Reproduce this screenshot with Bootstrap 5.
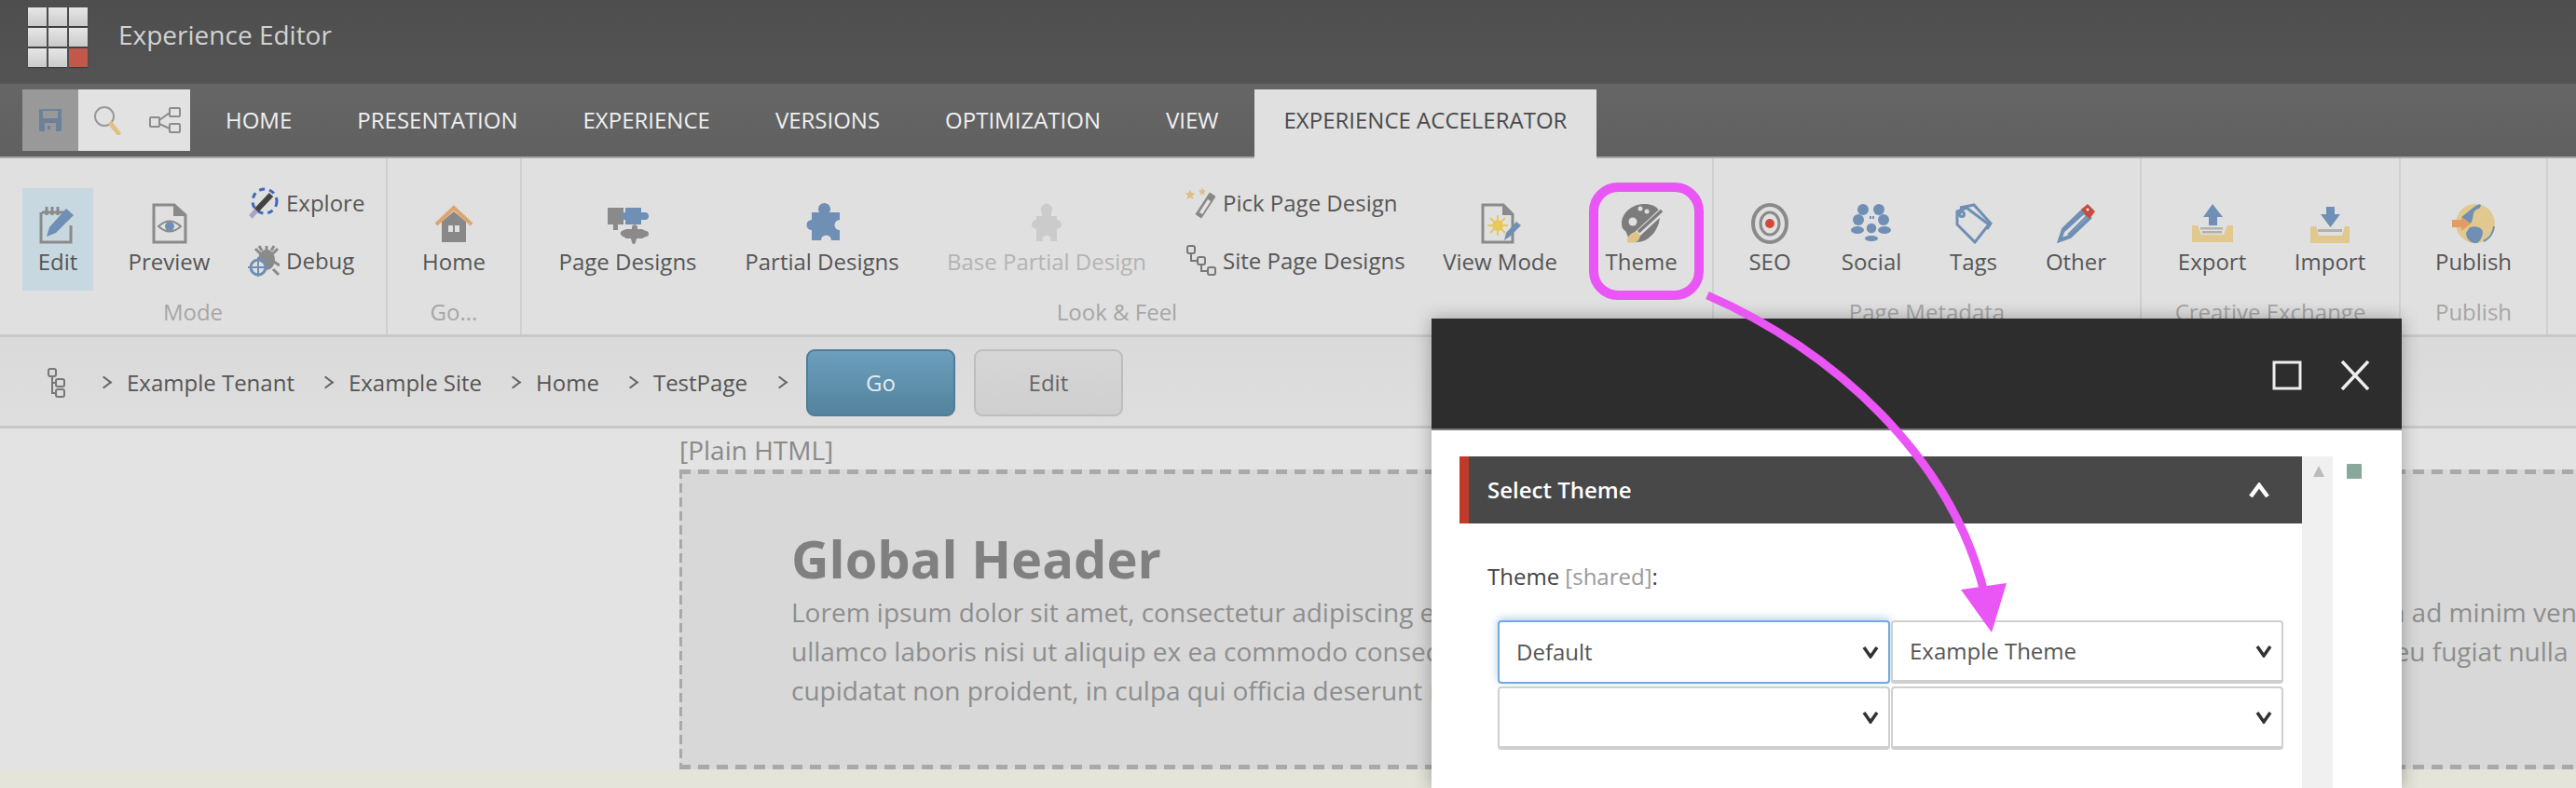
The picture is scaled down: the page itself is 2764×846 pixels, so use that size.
<!DOCTYPE html>
<html lang="en">
<head>
    <meta charset="UTF-8">
    <title>Experience Editor</title>
    <link href="https://cdn.jsdelivr.net/npm/bootstrap@5.3.0/dist/css/bootstrap.min.css" rel="stylesheet">
    <style>
        html, body { margin: 0; height: 846px; overflow: hidden; }
        body { font-family: "Open Sans", "Noto Sans", sans-serif; background: #e3e3e3; color: #555; }
        .page-wrap { position: relative; width: 2764px; height: 846px; overflow: hidden; }

        .top-bar { height: 90px; background: linear-gradient(#4e4e4e, #545454); padding: 8px 0 0 30px; }
        .app-logo { display: grid; grid-template-columns: repeat(3, 20px); grid-auto-rows: 20px; gap: 2px; height: 64px; }
        .app-logo i { display: block; background: linear-gradient(#e6e6e6, #cacaca); box-shadow: 0 1px 1px rgba(0,0,0,.3); }
        .app-logo i.logo-red { background: #c2574c; }
        .app-title { font-size: 28px; color: #d2d2d2; margin: -3px 0 0 33px; height: 64px; line-height: 64px; }

        .tab-bar { height: 80px; background: linear-gradient(#666, #606060); padding: 6px 0 0 24px; border-bottom: 2px solid #a8a8a8; }
        .quick-tools { width: 180px; height: 66px; background: #e2e2e2; }
        .quick-save { width: 60px; background: #999; }
        .quick-rest { flex: 1; padding-left: 16px; gap: 28px; }
        .tab-list { margin-left: 3px; }
        .tab-list .nav-link { color: #f0f0f0; font-size: 24px; padding: 0 35px; height: 66px; line-height: 66px; }
        .tab-list .nav-link.active-tab { background: #e0e0e0; color: #4a4a4a; height: 76px; padding: 0 32px; margin-left: 3px; }

        .ribbon { height: 192px; background: #e0e0e0; border-bottom: 3px solid #c8c8c8; position: relative; }
        .rb-group { height: 100%; border-right: 2px solid #d0d0d0; display: flex; flex-direction: column; flex: none; padding-top: 32px; }
        .rb-items { display: flex; height: 110px; }
        .rb-item { display: flex; flex-direction: column; align-items: center; padding-top: 16px; font-size: 24px; line-height: 36px; white-space: nowrap; color: #565656; }
        .rb-item svg { height: 44px; display: block; margin-bottom: 1px; }
        .rb-item.selected { background: #c8d8e1; width: 76px; }
        .rb-item.disabled-item { color: #b4b4b4; }
        .rb-side { display: flex; flex-direction: column; gap: 26px; margin-top: -2px; font-size: 24px; white-space: nowrap; color: #565656; }
        .rb-side > div { display: flex; align-items: center; height: 36px; }
        .rb-side svg { width: 34px; height: 34px; margin-right: 7px; flex: none; }
        .rb-caption { text-align: center; font-size: 24px; color: #a6a6a6; margin-top: 5px; white-space: nowrap; }

        .crumb-bar { height: 98px; background: linear-gradient(#dadada, #dedede); border-bottom: 3px solid #c8c8c8; padding-left: 50px; }
        .crumb-tree { margin-top: 2px; }
        .crumb-bar .breadcrumb { margin: 2px 0 0 34px; font-size: 24px; }
        .crumb-bar .breadcrumb-item { color: #555; padding-left: 0; display: flex; align-items: center; }
        .crumb-bar .breadcrumb-item::before { content: ""; float: none; padding: 0; width: 11px; height: 11px; border-top: 2px solid #666; border-right: 2px solid #666; transform: rotate(45deg) skew(-8deg, -8deg); margin: 0 19px 0 28px; }
        .crumb-bar .breadcrumb-item:first-child::before { margin-left: 0; display: block; }
        .crumb-end { width: 11px; height: 11px; border-top: 2px solid #666; border-right: 2px solid #666; transform: rotate(45deg) skew(-8deg, -8deg); margin: 2px 23px 0 29px; }
        .btn-go, .btn-editmode { width: 160px; height: 72px; font-size: 24px; border-radius: 9px; margin-top: 2px; }
        .btn-go { background: linear-gradient(#6c9fbd, #53839d); border: 2px solid #4d7d98; color: #e4ecf2; }
        .btn-editmode { background: linear-gradient(#d6d6d6, #cfcfcf); border: 2px solid #bdbdbd; color: #666; margin-left: 20px; }

        .canvas-area { padding-left: 729px; background: #e3e3e3; }
        .plain-label { font-size: 28px; color: #8a8a8a; height: 44px; line-height: 46px; }
        .dashed-box { height: 322px; padding: 59px 0 0 120px; white-space: nowrap;
            background:
                repeating-linear-gradient(90deg, #a9a9a9 0 12px, transparent 12px 20px) top / 100% 5px no-repeat,
                repeating-linear-gradient(90deg, #a9a9a9 0 12px, transparent 12px 20px) bottom / 100% 5px no-repeat,
                repeating-linear-gradient(180deg, #a9a9a9 0 10px, transparent 10px 15px) left / 3px 100% no-repeat,
                #d8d8d8; }
        .dashed-box h1 { font-size: 56px; font-weight: 700; color: #808080; margin: 0; line-height: 73px; }
        .dashed-box p { font-size: 28px; color: #8e8e8e; line-height: 42px; margin: 0; }
        .beige-strip { height: 30px; background: #e4e4da; }

        .theme-dialog { position: absolute; left: 1536px; top: 342px; width: 1041px; height: 504px; background: #fff; box-shadow: 0 0 18px rgba(0,0,0,.3); }
        .dlg-head { height: 120px; background: #2d2d2d; padding: 45px 34px 0 0; gap: 41px; border-bottom: 2px solid #777; }
        .dlg-body { padding: 28px 0 0 30px; }
        .section-col { width: 904px; }
        .section-bar { height: 72px; background: #484848; border-left: 10px solid #c0392b; color: #fff; font-weight: 600; font-size: 24px; padding: 0 34px 0 20px; }
        .theme-field { padding: 39px 0 0 30px; font-size: 24px; color: #444; }
        .theme-field span { color: #999; }
        .select-grid { display: grid; grid-template-columns: 421px 421px; gap: 3px 1px; margin: 29px 0 0 41px; }
        .select-grid .form-select { height: 68px; font-size: 24px; color: #555; font-family: inherit; border: 2px solid #cfcfcf; border-bottom-width: 4px; border-radius: 4px; padding: 0 36px 0 18px;
            background-image: url("data:image/svg+xml,%3csvg xmlns='http://www.w3.org/2000/svg' viewBox='0 0 18 14'%3e%3cpath fill='none' stroke='%23333' stroke-width='3.5' d='M2 2l7 10 7-10'/%3e%3c/svg%3e");
            background-size: 18px 14px; background-position: right 10px center; }
        .select-grid .form-select.focus-look { border: 2px solid #74a9dc; box-shadow: 0 -2px 10px rgba(116,169,220,.55); }
        .scroll-col { width: 33px; background: #f0f0f0; height: 420px; padding: 10px 0 0 12px; }
        .scroll-up { width: 0; height: 0; border-left: 6px solid transparent; border-right: 6px solid transparent; border-bottom: 12px solid #bbb; }
        .green-mark { width: 16px; height: 16px; background: #87a89a; margin: 8px 0 0 15px; border-radius: 1px; }

        .callout-layer { position: absolute; left: 0; top: 0; pointer-events: none; }
    </style>
</head>
<body>
<div class="page-wrap">
    <div class="top-bar d-flex">
        <div class="app-logo">
            <i></i><i></i><i></i><i></i><i></i><i></i><i></i><i></i><i class="logo-red"></i>
        </div>
        <div class="app-title">Experience Editor</div>
    </div>

    <div class="tab-bar d-flex">
        <div class="quick-tools d-flex">
            <div class="quick-save d-flex align-items-center justify-content-center">
                <svg width="26" height="26" viewBox="0 0 26 26"><path fill="#6b8299" d="M1 1h24v24H1z"/><path fill="#999" d="M5 3h16v8H5zM7 16h12v9H7z"/><path fill="#6b8299" d="M10 19h3v4h-3z"/></svg>
            </div>
            <div class="quick-rest d-flex align-items-center">
                <svg width="32" height="32" viewBox="0 0 32 32"><circle cx="12" cy="12" r="10" fill="none" stroke="#999" stroke-width="2"/><path stroke="#e0c07e" stroke-width="5" stroke-linecap="round" d="M19 20l8 10"/></svg>
                <svg width="34" height="28" viewBox="0 0 34 28" fill="none" stroke="#8c8c8c" stroke-width="2"><rect x="1" y="11" width="10" height="10" rx="1"/><rect x="22" y="1" width="11" height="9" rx="1"/><rect x="22" y="18" width="11" height="9" rx="1"/><path d="M11 14l11-8M11 18l11 5"/></svg>
            </div>
        </div>
        <ul class="nav tab-list">
            <li class="nav-item"><a class="nav-link" href="#">HOME</a></li>
            <li class="nav-item"><a class="nav-link" href="#">PRESENTATION</a></li>
            <li class="nav-item"><a class="nav-link" href="#">EXPERIENCE</a></li>
            <li class="nav-item"><a class="nav-link" href="#">VERSIONS</a></li>
            <li class="nav-item"><a class="nav-link" href="#">OPTIMIZATION</a></li>
            <li class="nav-item"><a class="nav-link" href="#">VIEW</a></li>
            <li class="nav-item"><a class="nav-link active-tab" href="#">EXPERIENCE ACCELERATOR</a></li>
        </ul>
    </div>

    <div class="ribbon d-flex">
        <div class="rb-group" style="width:416px">
            <div class="rb-items" style="padding-left:24px">
                <div class="rb-item selected">
                    <svg width="40" viewBox="0 0 40 44"><path fill="none" stroke="#8a8a8a" stroke-width="3" d="M3 10h26M2 10v32h32V24"/><path stroke="#8a8a8a" stroke-width="3" d="M8 4v9M14 4v9M20 4v9"/><path fill="#6f8fb5" d="M8 36l3-10 18-20 8 7-19 19z"/></svg>
                    Edit
                </div>
                <div class="rb-item" style="margin-left:38px;width:87px">
                    <svg width="38" viewBox="0 0 38 44"><path fill="none" stroke="#8a8a8a" stroke-width="3" d="M2 2h22l12 11v29H2z"/><path fill="#8a8a8a" d="M23 2l13 12H23z"/><path fill="none" stroke="#8a8a8a" stroke-width="2" d="M7 25q12-11 24 0q-12 11-24 0z"/><circle cx="19" cy="25" r="5" fill="#6f8fb5"/></svg>
                    Preview
                </div>
                <div class="rb-side" style="margin-left:41px">
                    <div><svg viewBox="0 0 34 34"><circle cx="18" cy="15" r="13" fill="none" stroke="#3f68bd" stroke-width="3" stroke-dasharray="6 5"/><path stroke="#444" stroke-width="6" d="M25 8L9 25"/><path stroke="#aaa0c8" stroke-width="5" d="M9 25l-6 7"/></svg>Explore</div>
                    <div><svg viewBox="0 0 34 34"><ellipse cx="20" cy="16" rx="9" ry="11" fill="#8a8a8a"/><path stroke="#8a8a8a" stroke-width="3" fill="none" d="M8 4l6 6M32 4l-6 6M12 1l3 5M28 1l-3 5M20 1v5M28 18l6 4M27 26l6 6"/><circle cx="11" cy="24" r="8" fill="#e0e0e0" stroke="#6f8fb5" stroke-width="3"/><path stroke="#6f8fb5" stroke-width="2" d="M11 13v22M0 24h22"/></svg>Debug</div>
                </div>
            </div>
            <div class="rb-caption">Mode</div>
        </div>

        <div class="rb-group" style="width:144px">
            <div class="rb-items justify-content-center">
                <div class="rb-item">
                    <svg width="42" viewBox="0 0 42 44"><path fill="#888" d="M8 20L21 9l13 11v22H8z"/><path fill="#e0e0e0" d="M15 24h12v7H15z"/><path fill="#888" d="M20 24h2v7h-2z"/><path fill="none" stroke="#dca56e" stroke-width="4" d="M2 23L21 5l19 18"/></svg>
                    Home
                </div>
            </div>
            <div class="rb-caption">Go...</div>
        </div>

        <div class="rb-group" style="width:1279px">
            <div class="rb-items" style="padding-left:40px">
                <div class="rb-item" style="width:147px">
                    <svg width="46" viewBox="0 0 46 44"><path fill="#8a8a8a" d="M1 5h17v18h-6v6H7v-6H1z"/><path fill="#6f8fb5" d="M20 5h17v5h4a3.500 3.500 0 0 1 0 8h-4v5H20v-5a4 4 0 0 1 0-8z"/><path fill="#8a8a8a" d="M21 28h6v-3a3.500 3.500 0 0 1 6 0v3h5l4 2a3 3 0 0 1 0 6l-4 2h-6l-1 4a2 2 0 0 1-4 0l-1-4h-5l-5-3a3.500 3.500 0 0 1 0-5z"/></svg>
                    Page Designs
                </div>
                <div class="rb-item" style="margin-left:53px;width:164px">
                    <svg width="42" viewBox="0 0 42 44"><path fill="#6f8fb5" d="M10 10h8a6.500 6.500 0 1 1 11 0h11v8a5.500 5.500 0 1 0 0 11v11h-9a5.500 5.500 0 1 0-11 0H10V29a5.500 5.500 0 1 1 0-11z"/></svg>
                    Partial Designs
                </div>
                <div class="rb-item disabled-item" style="margin-left:53px;width:212px">
                    <svg width="44" viewBox="0 0 44 44"><path fill="#cbcbcb" d="M17 10a6 6 0 1 1 10 0v4h6v4a5 5 0 1 1 0 10v13h-7a4.500 4.500 0 1 0-8 0h-7V28a5 5 0 1 1 0-10v-4h6z"/></svg>
                    Base Partial Design
                </div>
                <div class="rb-side" style="margin-left:43px">
                    <div><svg viewBox="0 0 34 34" style="margin-right:6px"><path fill="#d9c08a" d="M5 2l1.500 4 4 .5-3 2.500 1 4-3.500-2-3.500 2 1-4-3-2.500 4-.5zM18 0l1 3 3 .5-2 2 .5 3-2.500-1.500-2.500 1.500.5-3-2-2 3-.5z"/><path fill="#888" stroke="#888" d="M26 6l6 4-15 23-6-4z"/><path fill="#e4e4e4" d="M24 13l3 2-9 14-3-2z"/></svg>Pick Page Design</div>
                    <div><svg viewBox="0 0 34 34" fill="none" stroke="#777" stroke-width="2" style="margin-right:6px"><rect x="2" y="1" width="8" height="8" rx="2"/><rect x="13" y="13" width="8" height="8" rx="2"/><rect x="24" y="24" width="8" height="8" rx="2"/><path d="M6 9v8h7M17 21v7h7"/></svg>Site Page Designs</div>
                </div>
                <div class="rb-item" style="margin-left:41px;width:122px">
                    <svg width="44" viewBox="0 0 44 44"><path fill="none" stroke="#8a8a8a" stroke-width="3" d="M3 2h22l10 10v30H3z"/><path fill="#8a8a8a" d="M24 2l11 11H24z"/><circle cx="19" cy="24" r="6" fill="#e9c95a"/><path stroke="#e9c95a" stroke-width="2" d="M19 13v22M8 24h22M11 16l16 16M27 16L11 32"/><path fill="#6f8fb5" d="M26 40l2-8 11-12 5 4-12 12z"/></svg>
                    View Mode
                </div>
                <div class="rb-item" style="margin-left:53px;width:75px">
                    <svg width="46" viewBox="0 0 46 44"><path fill="#7c7c7c" d="M2 22C2 10 14 1 26 1c10 0 17 4 17 12 0 15-11 29-25 29-10 0-9-8-12-12-3-2-4-4-4-8z"/><circle cx="14" cy="20" r="4.500" fill="#e0e0e0"/><circle cx="22" cy="6" r="2.500" fill="#e0e0e0"/><circle cx="29" cy="9" r="2.500" fill="#e0e0e0"/><path stroke="#e0e0e0" stroke-width="7" d="M45 9L17 35"/><path stroke="#7c7c7c" stroke-width="3.500" d="M45 8L20 31"/><path fill="#dfc489" d="M8 42c-1-5 4-11 10-11 5 2 5 8-1 11-3 1-6 1-9 0z"/></svg>
                    Theme
                </div>
            </div>
            <div class="rb-caption">Look &amp; Feel</div>
        </div>

        <div class="rb-group" style="width:459px">
            <div class="rb-items" style="padding-left:38px">
                <div class="rb-item" style="width:44px">
                    <svg width="42" viewBox="0 0 42 44"><ellipse cx="21" cy="22" rx="18" ry="20" fill="none" stroke="#8a8a8a" stroke-width="4"/><ellipse cx="21" cy="22" rx="10" ry="12" fill="none" stroke="#8a8a8a" stroke-width="3"/><circle cx="21" cy="22" r="5" fill="#d4483a"/></svg>
                    SEO
                </div>
                <div class="rb-item" style="margin-left:55px;width:64px">
                    <svg width="44" viewBox="0 0 44 44" fill="#6f8fb5"><circle cx="13" cy="7" r="6"/><circle cx="30" cy="7" r="6"/><circle cx="8" cy="18" r="6"/><circle cx="35" cy="18" r="6"/><ellipse cx="7" cy="29" rx="7" ry="4"/><ellipse cx="36" cy="29" rx="7" ry="4"/><circle cx="22" cy="27" r="6" stroke="#e0e0e0" stroke-width="1.500"/><path d="M15 38c0-4 14-4 14 0 0 4-14 4-14 0zM20 14h2v3h-2zM23 14h2v3h-2z"/></svg>
                    Social
                </div>
                <div class="rb-item" style="margin-left:52px;width:51px">
                    <svg width="40" viewBox="0 0 40 44" fill="none" stroke="#6f8fb5" stroke-width="3"><path d="M5 5L20 2l18 20-4 6"/><path d="M2 23V9l10-4 24 18-15 19z"/><circle cx="7" cy="12" r="2.500"/></svg>
                    Tags
                </div>
                <div class="rb-item" style="margin-left:52px;width:65px">
                    <svg width="42" viewBox="0 0 42 44"><path fill="none" stroke="#6f8fb5" stroke-width="4" d="M3 40l4-12 21-20 7 8-21 20z"/><path stroke="#6f8fb5" stroke-width="2" d="M8 30l22-20M12 34l20-20"/><path fill="#c94a3e" d="M26 7l7-6 8 8-6 8z"/><circle cx="33" cy="7" r="1.500" fill="#eee"/></svg>
                    Other
                </div>
            </div>
            <div class="rb-caption">Page Metadata</div>
        </div>

        <div class="rb-group" style="width:278px">
            <div class="rb-items" style="padding-left:39px">
                <div class="rb-item" style="width:73px">
                    <svg width="46" viewBox="0 0 46 44"><path fill="#e0c88f" d="M1 24h6l4 10h24l4-10h6v18H1z"/><path fill="#b3b1a8" d="M10 26h24v2.500H10zM12 30h21v2.500H12z"/><path fill="#6f8fb5" d="M23 1l11 14h-6v9h-9v-9h-6z"/></svg>
                    Export
                </div>
                <div class="rb-item" style="margin-left:52px;width:76px">
                    <svg width="44" viewBox="0 0 44 44"><path fill="#e0c88f" d="M1 25h6l3 10h25l3-10h5v18H1z"/><path fill="#b3b1a8" d="M9 28h26v3H9z"/><path fill="#6f8fb5" d="M18 4h9v8h6L22.500 26 12 12h6z"/></svg>
                    Import
                </div>
            </div>
            <div class="rb-caption">Creative Exchange</div>
        </div>

        <div class="rb-group" style="width:158px">
            <div class="rb-items justify-content-center">
                <div class="rb-item">
                    <svg width="46" viewBox="0 0 46 44"><circle cx="25" cy="22" r="21" fill="#e0c88f"/><path fill="#6f8fb5" d="M30 1c-6 2-10 6-16 11l-4 3 10 7c4-6 1-12 6-15 4-1 6-4 4-6zM19 26c6-2 13 0 14 5 0 5-3 10-6 12-7 1-12-5-12-11z"/><path fill="none" stroke="#6f8fb5" stroke-width="2" d="M45 25c-1 8-5 13-11 16"/><path fill="#e09c62" d="M0 18h10v-3l10 7-10 8v-4H0z"/></svg>
                    Publish
                </div>
            </div>
            <div class="rb-caption">Publish</div>
        </div>
    </div>

    <div class="crumb-bar d-flex align-items-center">
        <svg class="crumb-tree" width="22" height="32" viewBox="0 0 22 32" fill="none" stroke="#777" stroke-width="2"><rect x="2" y="1" width="8" height="8" rx="2"/><rect x="10" y="12" width="9" height="8" rx="2"/><rect x="10" y="23" width="9" height="8" rx="2"/><path d="M6 9v18h4M6 16h4"/></svg>
        <ol class="breadcrumb align-items-center">
            <li class="breadcrumb-item">Example Tenant</li>
            <li class="breadcrumb-item">Example Site</li>
            <li class="breadcrumb-item">Home</li>
            <li class="breadcrumb-item">TestPage</li>
        </ol>
        <div class="crumb-end"></div>
        <button class="btn btn-go" type="button">Go</button>
        <button class="btn btn-editmode" type="button">Edit</button>
    </div>

    <div class="canvas-area">
        <div class="plain-label">[Plain HTML]</div>
        <div class="dashed-box">
            <h1>Global Header</h1>
            <p>Lorem ipsum dolor sit amet, consectetur adipiscing elit, sed do eiusmod tempor incididunt ut labore et dolore magna aliqua. Ut enim ad minim veniam, quis nostrud exercitation<br>
            ullamco laboris nisi ut aliquip ex ea commodo consequat. Duis aute irure dolor in reprehenderit in voluptate velit esse cillum dolore eu fugiat nulla pariatur. Excepteur<br>
            cupidatat non proident, in culpa qui officia deserunt mollit anim id est laborum.</p>
        </div>
    </div>
    <div class="beige-strip"></div>

    <div class="theme-dialog">
        <div class="dlg-head d-flex justify-content-end">
            <svg width="32" height="32" viewBox="0 0 32 32"><rect x="2" y="2" width="28" height="28" fill="none" stroke="#eee" stroke-width="3"/></svg>
            <svg width="32" height="32" viewBox="0 0 32 32"><path stroke="#eee" stroke-width="3.500" d="M2 1l28 30M30 1L2 31"/></svg>
        </div>
        <div class="dlg-body d-flex">
            <div class="section-col">
                <div class="section-bar d-flex align-items-center justify-content-between">
                    <span>Select Theme</span>
                    <svg width="24" height="16" viewBox="0 0 24 16"><path fill="none" stroke="#fff" stroke-width="4.500" d="M3 15L12 3l9 12"/></svg>
                </div>
                <div class="theme-field">Theme <span>[shared]</span>:</div>
                <div class="select-grid">
                    <select class="form-select focus-look"><option>Default</option></select>
                    <select class="form-select"><option>Example Theme</option></select>
                    <select class="form-select"><option></option></select>
                    <select class="form-select"><option></option></select>
                </div>
            </div>
            <div class="scroll-col"><div class="scroll-up"></div></div>
            <div class="green-mark"></div>
        </div>
    </div>

    <svg class="callout-layer" width="2764" height="846" viewBox="0 0 2764 846">
        <rect x="1710" y="201" width="113" height="116" rx="26" fill="none" stroke="#ea55f5" stroke-width="10"/>
        <path d="M1832 317C1965 375 2095 490 2130 640" fill="none" stroke="#ea55f5" stroke-width="9"/>
        <path d="M2104 633L2153 626L2137 679Z" fill="#ea55f5"/>
    </svg>
</div>
</body>
</html>
